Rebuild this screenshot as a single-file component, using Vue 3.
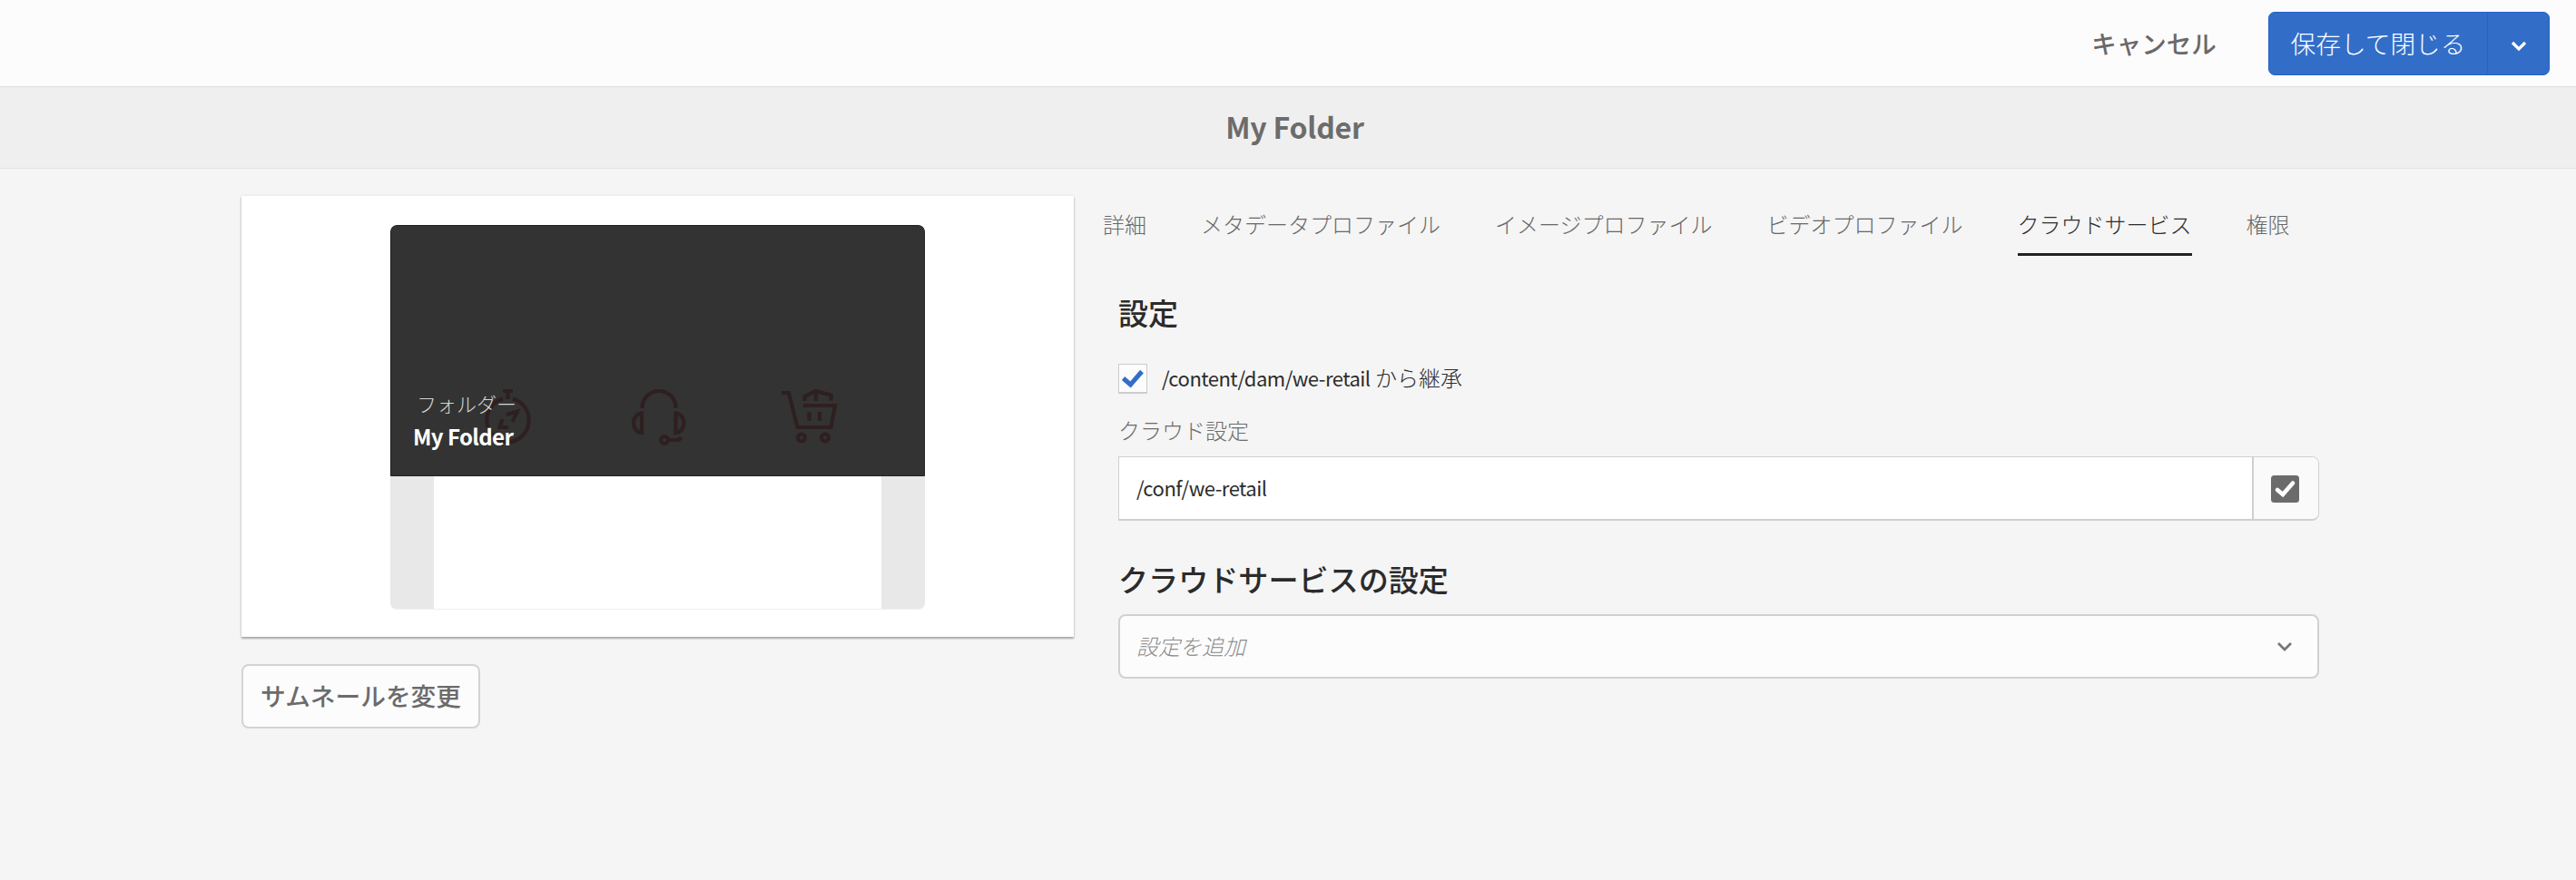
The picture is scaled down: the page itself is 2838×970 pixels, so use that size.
<script setup>
const tabs = [
  { label: '詳細' },
  { label: 'メタデータプロファイル' },
  { label: 'イメージプロファイル' },
  { label: 'ビデオプロファイル' },
  { label: 'クラウドサービス', active: true },
  { label: '権限' },
]
</script>

<template>
  <div class="page">
    <header class="actions">
      <button class="cancel">キャンセル</button>
      <div class="save">
        <button class="save-main">保存して閉じる</button>
        <button class="save-more" aria-label="menu">
          <svg width="18" height="12" viewBox="0 0 18 12"><path d="M2 2l7 7 7-7" fill="none" stroke="#fff" stroke-width="3.2" /></svg>
        </button>
      </div>
    </header>
    <div class="titlebar"><h1>My Folder</h1></div>

    <main class="content">
      <section class="left">
        <div class="card">
          <div class="thumb">
            <div class="overlay">
              <svg class="art" width="589" height="277" viewBox="430 248 589 277" fill="none" stroke="#2e1f20" stroke-width="4.2">
                <path d="M554 431h11M559.500 431v9" />
                <path d="M554 439.500A24.500 24.500 0 0 0 559.500 487.500M565 439.500A24.500 24.500 0 0 1 559.500 487.500" />
                <path d="M558 457l12-3.500-5.500 11.500M553.500 462l-3 9h9.500" />
                <path d="M707.500 450v-1a18.500 18 0 0 1 37 0v1" />
                <path d="M707 455.500v21.500c-12-1-12-20.500 0-21.500zM744.500 455.500v21.500c12-1 12-20.500 0-21.500z" />
                <circle cx="732" cy="485" r="4" />
                <path d="M736 485h9q4 0 5.500-3" />
                <path d="M861 433h8l9.500 38h37l4.500-24h-35" />
                <path d="M886.500 442v-5l12-6 17 4.500v6M899 431v11M891.500 454v10M903 454v10" />
                <circle cx="883" cy="482.500" r="4" />
                <circle cx="909" cy="482.500" r="4" />
              </svg>
              <div class="kind">フォルダー</div>
              <div class="name">My Folder</div>
            </div>
          </div>
        </div>
        <button class="change">サムネールを変更</button>
      </section>

      <section class="right">
        <nav class="tabs">
          <a v-for="t in tabs" :key="t.label" class="tab" :class="{ active: t.active }">{{ t.label }}</a>
        </nav>
        <div class="form">
          <h2>設定</h2>
          <label class="inherit">
            <span class="box">
              <svg width="26" height="22" viewBox="0 0 26 22"><path d="M2.500 11l8 7L23 3.500" fill="none" stroke="#326ec8" stroke-width="5" /></svg>
            </span>
            <span class="inherit-text"><span class="path">/content/dam/we-retail</span> から継承</span>
          </label>
          <div class="field-label">クラウド設定</div>
          <div class="picker">
            <div class="value"><span class="path">/conf/we-retail</span></div>
            <button class="pick" aria-label="select">
              <svg width="31" height="30" viewBox="0 0 31 30"><rect width="31" height="30" rx="3.500" fill="#6b6b6b" /><path d="M7 16l6 5L24 8.500" fill="none" stroke="#fff" stroke-width="4.600" stroke-linecap="round" /></svg>
            </button>
          </div>
          <h2 class="second">クラウドサービスの設定</h2>
          <div class="select">
            <span class="placeholder">設定を追加</span>
            <svg width="18" height="12" viewBox="0 0 18 12"><path d="M2 2l7 7 7-7" fill="none" stroke="#777" stroke-width="2.800" /></svg>
          </div>
        </div>
      </section>
    </main>
  </div>
</template>

<style>
body { background: #f5f5f5; }
</style>

<style scoped>
* { box-sizing: border-box; margin: 0; padding: 0; }
.page { width: 2838px; height: 970px; background: #f5f5f5; overflow: hidden; font-family: "Noto Sans CJK JP", sans-serif; color: #2c2c2c; font-weight: 300; }
button { font-family: inherit; border: 0; background: none; white-space: nowrap; }
svg { display: block; }
.actions { height: 96px; background: #fcfcfc; border-bottom: 1px solid #e0e0e0; display: flex; justify-content: flex-end; align-items: flex-start; padding: 13px 29px 0 0; }
.cancel { height: 70px; width: 138px; margin-right: 57px; font-size: 27.500px; line-height: 68px; padding-bottom: 2px; font-weight: 500; color: #696969; }
.save { display: flex; width: 310px; height: 70px; background: #326ec8; border: 1px solid #2262c4; border-radius: 7px; }
.save-main { width: 241px; border-right: 1px solid #2664c2; color: #fff; font-size: 27.700px; line-height: 66px; padding-bottom: 2px; font-weight: 300; text-align: center; }
.save-more { flex: 1; display: flex; justify-content: center; align-items: center; padding-top: 6px; }
.titlebar { height: 90px; background: #efefef; border-bottom: 1px solid #e1e1e1; padding-left: 15px; }
.titlebar h1 { font-size: 32px; line-height: 86px; letter-spacing: -.2px; font-weight: 700; color: #6c6c6c; text-align: center; }
.content { display: flex; padding: 30px 0 0 266px; }
.left { width: 917px; flex: none; }
.card { height: 486px; background: #fff; box-shadow: 0 2px 2px rgba(0,0,0,.3), 0 0 3px rgba(0,0,0,.1); padding: 32px 164px 0; }
.thumb { width: 589px; height: 424px; border-radius: 7px; overflow: hidden; border-bottom: 1px solid #efefef; background: linear-gradient(90deg, #e8e8e8 48px, #fff 48px, #fff 541px, #e8e8e8 541px); }
.overlay { position: relative; height: 277px; background: #333; border: 1px solid #222; border-radius: 7px 7px 0 0; padding: 177px 0 0 28px; }
.art { position: absolute; left: -1px; top: -1px; }
.kind, .name { position: relative; }
.kind { font-size: 22px; line-height: 36px; color: #d5d5d5; }
.name { margin: 1px 0 0 -4px; font-size: 24px; line-height: 36px; letter-spacing: -.6px; font-weight: 700; color: #fff; }
.change { display: block; margin-top: 30px; width: 263px; height: 71px; border: 2px solid #d3d3d3; border-radius: 8px; background: #fcfcfc; color: #6b6b6b; font-size: 27.700px; line-height: 62px; padding-bottom: 3px; font-weight: 500; }
.right { width: 1341px; margin-left: 31px; }
.tabs { display: flex; gap: 60px; padding-left: 1px; }
.tab { height: 66px; line-height: 62px; font-size: 24px; color: #686868; white-space: nowrap; }
.tab.active { color: #2c2c2c; border-bottom: 3px solid #222; }
.form { padding-left: 18px; }
h2 { margin-top: 38px; height: 49px; line-height: 48px; font-size: 33.100px; font-weight: 500; color: #2b2b2b; white-space: nowrap; }
.inherit { display: flex; align-items: center; margin-top: 32px; height: 33px; font-size: 24px; }
.box { width: 32px; height: 33px; border: 1px solid #ccc; border-bottom-width: 2px; background: #fcfcfc; display: flex; align-items: center; justify-content: center; }
.inherit-text { margin: -3px 0 0 16px; line-height: 33px; white-space: nowrap; }
.path { font-size: 22px; font-weight: 400; letter-spacing: -.5px; }
.field-label { margin-top: 22px; height: 38px; line-height: 36px; font-size: 24px; color: #6c6c6c; }
.picker { margin-top: 9px; height: 71px; width: 1323px; display: flex; border: 1px solid #cfcfcf; border-bottom-width: 2px; border-radius: 0 8px 8px 0; overflow: hidden; background: #fff; }
.value { flex: 1; padding-left: 19px; line-height: 67px; font-size: 22px; }
.pick { width: 73px; border-left: 2px solid #cfcfcf; background: #fafafa; display: flex; align-items: center; justify-content: center; padding: 2px 2px 0 0; }
.second { margin-top: 40px; }
.select { margin-top: 14px; width: 1323px; height: 71px; border: 2px solid #d1d1d1; border-radius: 8px; background: #fcfcfc; display: flex; align-items: center; justify-content: space-between; padding: 0 27px 0 18px; }
.placeholder { margin-top: -3px; font-size: 24px; font-style: italic; color: #8c8c8c; }
</style>
